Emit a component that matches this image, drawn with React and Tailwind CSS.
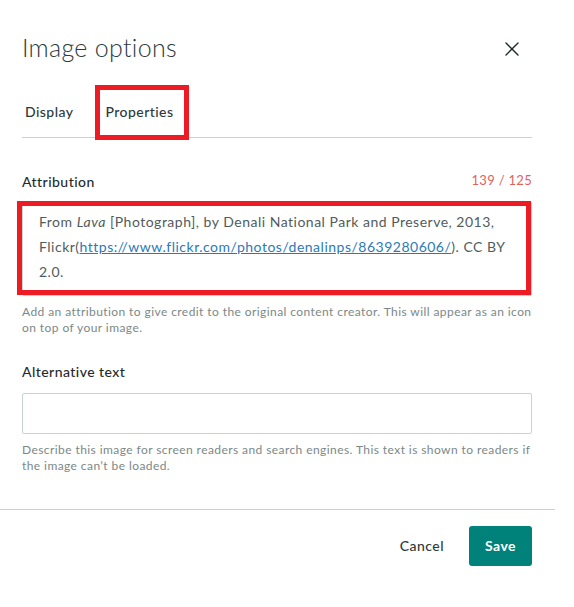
import { X } from 'lucide-react';

const FONT = "font-['Lato','Noto_Sans',sans-serif]";

function Field({ label, counter, children, help }) {
  return (
    <div>
      <div className="flex items-center justify-between h-5">
        <span className="text-[14px] font-medium text-[#1f2b2b] tracking-[0.45px]">{label}</span>
        {counter && <span className="text-[13px] text-[#e0625d] tracking-[0.3px]">{counter}</span>}
      </div>
      {children}
      <p className="mt-2 text-[12px] leading-4 text-[#7b8887] tracking-[0.42px]">{help}</p>
    </div>
  );
}

export default function App() {
  return (
    <div className={`${FONT} relative w-[555px] bg-white pt-[29px] pb-[41px]`}>
      {/* header */}
      <div className="flex items-center justify-between h-[38px] pl-[22px] pr-[31px]">
        <h1 className="text-[25px] font-light text-[#2c3a3a] tracking-[0.3px]">Image options</h1>
        <X size={24} strokeWidth={1.4} className="text-[#1d2b2b] mt-[2px]" />
      </div>

      {/* tabs */}
      <div className="mx-[22px] w-[510px] mt-[19px] h-[52px] pb-[1px] border-b border-[#c8d4d2] flex items-center gap-[32px] pl-[3px] tracking-[0.45px]">
        <button className="text-[14px] font-medium text-[#2c3a3a]">Display</button>
        <button className="text-[14px] font-medium text-[#2c3a3a]">Properties</button>
      </div>

      <div className="mx-[22px] w-[510px] mt-[33px]">
        <Field
          label="Attribution"
          counter="139 / 125"
          help="Add an attribution to give credit to the original content creator. This will appear as an icon on top of your image."
        >
          <div className="mt-[10px] h-[95px] border border-[#c8d4d2] rounded-[2px] px-4 pt-[7px] text-[14px] leading-[25px] text-[#505c5c] tracking-[0.5px]">
            From <i>Lava</i> [Photograph], by Denali National Park and Preserve, 2013, Flickr(
            <a className="text-[#2a7ab8] underline">https://www.flickr.com/photos/denalinps/8639280606/</a>
            ). CC BY 2.0.
          </div>
        </Field>

        <div className="mt-[25px]">
          <Field
            label="Alternative text"
            help="Describe this image for screen readers and search engines. This text is shown to readers if the image can’t be loaded."
          >
            <div className="mt-[12px] h-[41px] border border-[#c8d4d2] rounded-[2px]" />
          </Field>
        </div>
      </div>

      {/* footer */}
      <div className="mt-[35px] border-t border-[#c8d4d2]" />
      <div className="mt-4 flex items-center justify-end pr-[23px] tracking-[0.45px]">
        <button className="text-[14px] font-medium text-[#2c3a3a] mr-[25px] pb-[2px]">Cancel</button>
        <button className="h-10 px-4 pb-[2px] rounded-[3px] bg-[#00827a] text-white text-[14px] font-bold">Save</button>
      </div>

      {/* red annotation boxes */}
      <div className="absolute left-[95px] top-[85px] w-[94px] h-[55px] border-[5px] border-[#ed1c24]" />
      <div className="absolute left-[17px] top-[201px] w-[514px] h-[94px] border-[5px] border-[#ed1c24]" />
    </div>
  );
}
